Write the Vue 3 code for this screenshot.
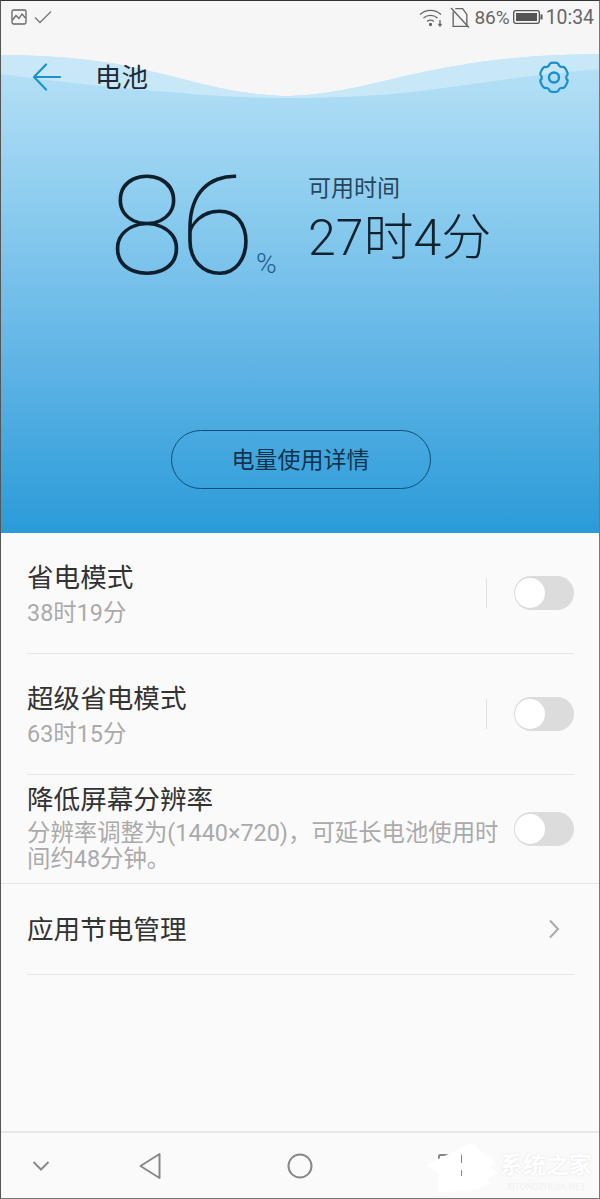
<template>
  <div class="screen">
    <section class="hero">
      <!-- 波浪背景 -->
      <svg class="wave" width="600" height="110" viewBox="0 0 600 110">
        <path d="M0 0H600V53C520 54 470 60 400 76C350 88 320 95 280 95C220 93 170 72 110 62C70 56 30 54 0 54Z" fill="#f6f6f6" />
        <path d="M0 54C30 54 70 56 110 62C170 72 220 93 280 95C320 95 350 88 400 76C470 60 520 54 600 53V68C540 72 480 82 420 90C370 96 320 97 280 97C220 97 160 90 100 85C60 81 30 77 0 73Z" fill="#c9e8f7" />
      </svg>

      <div class="status">
        <div class="status-left">
          <svg width="16" height="16" viewBox="0 0 16 16" fill="none" stroke="#666" stroke-width="1.3">
            <rect x="1" y="1" width="14" height="14" rx="1.5" />
            <path d="M1.5 11L5 6.5L8 9.5L11 5L14.5 9" />
          </svg>
          <svg width="18" height="14" viewBox="0 0 18 14" fill="none" stroke="#777" stroke-width="1.3">
            <path d="M1 7.5L6 12.5L17 1.5" />
          </svg>
        </div>
        <div class="status-right">
          <svg width="25" height="19" viewBox="0 0 25 19" fill="none" stroke="#666" stroke-width="1.3">
            <path d="M1 6.5C7 1 16 1 22 6.5" />
            <path d="M4.5 10C8.5 6.5 14.5 6.5 18.5 10" />
            <path d="M8 13.5C10 12 13 12 15 13.5" />
            <circle cx="11.5" cy="16.5" r="1" fill="#666" />
            <path d="M21 12V17M19.5 16L21 18L22.5 16" />
          </svg>
          <svg class="sim" width="20" height="21" viewBox="0 0 19 20" fill="none" stroke="#666" stroke-width="1.3">
            <path d="M3 4.5V18.5H16V7L12 1.5H5" />
            <path d="M1 1L18 19.5" />
          </svg>
          <span class="pct">86%</span>
          <svg width="30" height="16" viewBox="0 0 30 16">
            <rect x="0.7" y="1.7" width="25.6" height="12.6" rx="2" fill="none" stroke="#555" stroke-width="1.3" />
            <rect x="3" y="4" width="21" height="8" fill="#555" />
            <rect x="27.5" y="5.5" width="2" height="5" fill="#555" />
          </svg>
          <span class="time">10:34</span>
        </div>
      </div>

      <header class="titlebar">
        <svg class="back" width="30" height="28" viewBox="0 0 30 28" fill="none" stroke="#1b93cf" stroke-width="2.2" stroke-linecap="round" stroke-linejoin="round">
          <path d="M14 1.5L2 14L14 26.5M2.5 14H28" />
        </svg>
        <h1>电池</h1>
        <svg class="gear" width="34" height="34" viewBox="0 0 34 34" fill="none" stroke="#1b8fcb" stroke-width="2.4" stroke-linejoin="round">
          <path d="M12.5 3.5C14 2 20 2 21.5 3.5C22 6 24.5 7.5 27 6.7C29 7.5 32 13 31.5 15C29.5 16.5 29.5 19.5 31.5 21C32 23 29 28.5 27 29.3C24.5 28.5 22 30 21.5 32.5C20 34 14 34 12.5 32.5C12 30 9.5 28.5 7 29.3C5 28.5 2 23 2.5 21C4.5 19.5 4.5 16.5 2.5 15C2 13 5 7.5 7 6.7C9.5 7.5 12 6 12.5 3.5Z" transform="translate(1 0.5) scale(0.94)" />
          <circle cx="17" cy="17.5" r="5" />
        </svg>
      </header>

      <div class="stats">
        <div class="level">
          <span class="num">86</span>
          <span class="unit">%</span>
        </div>
        <div class="remain">
          <div class="remain-label">可用时间</div>
          <div class="remain-value">27时4分</div>
        </div>
      </div>

      <button class="detail-btn">电量使用详情</button>
    </section>

    <section class="list">
      <div class="row row-a">
        <div class="text">
          <div class="title">省电模式</div>
          <div class="sub">38时19分</div>
        </div>
        <i class="sep"></i>
        <span class="toggle"></span>
      </div>
      <div class="row row-a">
        <div class="text">
          <div class="title">超级省电模式</div>
          <div class="sub">63时15分</div>
        </div>
        <i class="sep"></i>
        <span class="toggle"></span>
      </div>
      <div class="row row-b">
        <div class="text">
          <div class="title">降低屏幕分辨率</div>
          <div class="sub wrap">分辨率调整为(1440×720)，可延长电池使用时间约48分钟。</div>
        </div>
        <span class="toggle"></span>
      </div>
      <div class="row row-c">
        <div class="title">应用节电管理</div>
        <svg width="12" height="20" viewBox="0 0 12 20" fill="none" stroke="#aaa" stroke-width="2">
          <path d="M2 1.5L10 10L2 18.5" />
        </svg>
      </div>
    </section>

    <nav class="navbar">
      <svg class="nav-down" width="18" height="12" viewBox="0 0 18 12" fill="none" stroke="#888" stroke-width="2">
        <path d="M1.5 2L9 9.5L16.5 2" />
      </svg>
      <svg class="nav-back" width="22" height="28" viewBox="0 0 22 28" fill="none" stroke="#888" stroke-width="2" stroke-linejoin="round">
        <path d="M20.5 2V26L1.5 14Z" />
      </svg>
      <svg class="nav-home" width="26" height="26" viewBox="0 0 26 26" fill="none" stroke="#888" stroke-width="2">
        <circle cx="13" cy="13" r="11.5" />
      </svg>
      <svg class="nav-recent" width="24" height="24" viewBox="0 0 24 24" fill="none" stroke="#888" stroke-width="2">
        <rect x="1" y="1" width="22" height="22" rx="1" />
      </svg>
    </nav>

    <!-- 水印 -->
    <div class="mark">
      <svg width="72" height="50" viewBox="0 0 72 50" fill="#fff" fill-rule="evenodd">
        <path d="M0 22L45 0L70 20L64 24L72 30L60 36L64 40L50 46L12 50V30ZM35 10H38V20H35ZM35 27H38V33H35Z" />
      </svg>
      <div class="mark-text">
        <span class="mark-name">系统之家</span>
        <span class="mark-url">XITONGZHIJIA.NET</span>
      </div>
    </div>
  </div>
</template>

<script setup>
</script>

<style>
html, body { margin: 0; background: #fafafa; }
</style>

<style scoped>
.screen {
  position: relative;
  width: 600px;
  height: 1199px;
  box-sizing: border-box;
  display: flex;
  flex-direction: column;
  overflow: hidden;
  background: #fafafa;
  border-top: 1px solid #333;
  border-left: 1px solid #555;
  border-right: 1px solid #777;
  border-bottom: 1px solid #777;
  font-family: Roboto, "Noto Sans CJK SC", sans-serif;
  color: #333;
}

.hero {
  position: relative;
  height: 532px;
  flex-shrink: 0;
  display: flex;
  flex-direction: column;
  background: linear-gradient(#b7e1f6 60px, #8dcdef 200px, #5db3e5 370px, #2a9bd8 532px);
}

.wave {
  position: absolute;
  left: 0;
  top: 0;
}

.status {
  position: relative;
  height: 32px;
  padding: 0 5px 4px 10px;
  display: flex;
  justify-content: space-between;
  align-items: center;
}

.status-left,
.status-right {
  display: flex;
  align-items: center;
}

.status-left { gap: 7px; }
.status-right { gap: 3px; color: #666; }
.sim { margin: 0 1px 0 3px; }
.pct { font-size: 19px; }
.time { font-size: 19.4px; }

.titlebar {
  position: relative;
  height: 80px;
  display: flex;
  align-items: center;
  padding: 0 28px 0 31px;
}

.titlebar h1 {
  flex: 1;
  margin: 0 0 4px 33px;
  font-size: 26.5px;
  font-weight: 400;
  color: #1d2b36;
}

.stats {
  position: relative;
  display: flex;
  margin-top: 45px;
  padding-left: 108px;
  height: 130px;
}

.level {
  display: flex;
  align-items: flex-end;
  width: 199px;
}

.num {
  font-weight: 100;
  font-size: 138px;
  line-height: 130px;
  letter-spacing: -5px;
  color: #0f1f2c;
}

.unit {
  font-weight: 300;
  font-size: 28px;
  line-height: 30px;
  margin: 0 0 13px 6px;
  color: #1d5f88;
}

.remain-label {
  margin-top: 12px;
  font-size: 23px;
  line-height: 30px;
  color: #26465c;
}

.remain-value {
  margin-top: 5px;
  font-size: 50px;
  line-height: 58px;
  font-weight: 300;
  color: #12222f;
  white-space: nowrap;
}

.detail-btn {
  position: relative;
  align-self: center;
  margin: 138px 0 0 1px;
  width: 260px;
  height: 59px;
  padding: 0 0 4px;
  box-sizing: border-box;
  border: 1.5px solid #0f4f7a;
  border-radius: 30px;
  background: transparent;
  font: inherit;
  font-size: 23px;
  color: #12344d;
}

.list {
  flex: 1;
}

.row {
  display: flex;
  align-items: center;
  margin: 0 25px 0 26px;
  box-sizing: border-box;
  border-bottom: 1px solid #e6e6e6;
}

.row-a { height: 121px; }
.row-a .text { padding-top: 2px; }
.row-b { height: 109px; margin: 0; padding: 0 25px 0 26px; }
.row-c { height: 91px; justify-content: space-between; padding-right: 14px; }
.row-c .title { padding-top: 2px; }

.text { flex: 1; min-width: 0; }

.title {
  font-size: 26.6px;
  line-height: 36px;
  color: #333;
}

.sub {
  margin-top: 2px;
  font-size: 23.4px;
  line-height: 30px;
  color: #aaa;
  white-space: nowrap;
}

.row-b .text { margin-top: -3px; }
.row-b .title { line-height: 34px; }
.sub.wrap {
  width: 478px;
  white-space: normal;
  line-height: 26px;
  margin-top: 3px;
}

.sep {
  width: 1px;
  height: 30px;
  margin-right: 27px;
  background: #e0e0e0;
}

.toggle {
  position: relative;
  flex-shrink: 0;
  width: 60px;
  height: 34px;
  border-radius: 17px;
  background: #dcdcdc;
}

.toggle::after {
  content: "";
  position: absolute;
  left: 1px;
  top: 2px;
  width: 30px;
  height: 30px;
  border-radius: 50%;
  background: #fff;
}

.navbar {
  display: flex;
  align-items: center;
  height: 65px;
  padding-left: 31px;
  border-top: 2px solid #e8e8e8;
}

.nav-back { margin-left: 89px; }
.nav-home { margin-left: 126px; }
.nav-recent { margin-left: 125px; }

.mark {
  position: absolute;
  right: 7px;
  bottom: 5px;
  display: flex;
  align-items: flex-start;
  gap: 2px;
  color: #fff;
}

.mark-text {
  margin-top: 10px;
  display: flex;
  flex-direction: column;
  align-items: center;
}

.mark-name {
  font-size: 23px;
  line-height: 26px;
  font-weight: 700;
  text-shadow: 0 0 2px #ddd;
}

.mark-url {
  margin-top: 3px;
  font-size: 9px;
  line-height: 10px;
  color: #f0f0f0;
  white-space: nowrap;
}
</style>
